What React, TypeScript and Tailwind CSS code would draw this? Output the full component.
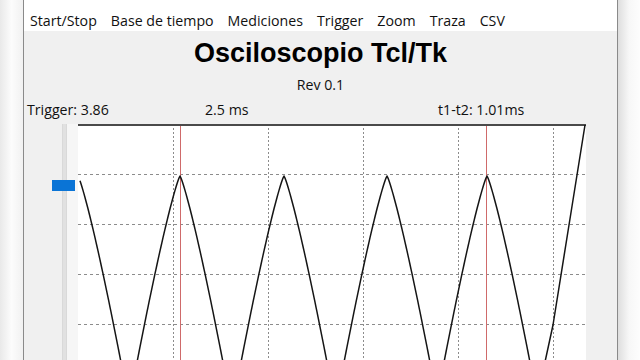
import React from "react";

const W = 508;
const H = 236;

function wavePath(): string {
  const peaks = [0, 102, 206, 309, 409];
  const pts: [number, number][] = [];
  const f = (x: number) => {
    let best = 1e9;
    for (const p of peaks) {
      const d = Math.abs(x - p);
      const y = 52 + 2.12 * Math.pow(d, 1.19);
      if (y < best) best = y;
    }
    return best;
  };
  for (let x = 2; x <= 459; x += 1) {
    pts.push([x, f(x)]);
  }
  pts.push([475, 201]);
  pts.push([491, 101]);
  pts.push([507, 1]);
  return pts.map((p, i) => `${i === 0 ? "M" : "L"}${p[0].toFixed(1)},${p[1].toFixed(1)}`).join(" ");
}

const vGrid = [95, 190, 285, 380, 475];
const hGrid = [50.5, 100.5, 150.5, 200.5];

export default function App() {
  const d = wavePath();
  return (
    <div
      className="w-[640px] h-[360px] overflow-hidden flex bg-white text-[#111]"
      style={{ fontFamily: '"Open Sans", "Noto Sans", sans-serif' }}
    >
      <div className="w-[23px] h-full bg-gradient-to-r from-[#e9e9e9] via-[#fcfcfc] to-[#f1f1f1]" />
      <div className="w-[595px] h-full flex flex-col border-x border-[#8a8a8a]">
        <div className="h-[32px] bg-white flex items-start pt-[11px] pl-[6px] gap-[14px] text-[14.2px] leading-[20px]">
          <span>Start/Stop</span>
          <span>Base de tiempo</span>
          <span>Mediciones</span>
          <span>Trigger</span>
          <span>Zoom</span>
          <span>Traza</span>
          <span>CSV</span>
        </div>
        <div className="flex-1 bg-[#f0f0f0] flex flex-col">
          <div
            className="mt-[7px] h-[31px] leading-[31px] text-center font-bold text-[27px] text-black"
            style={{ fontFamily: '"Liberation Sans", Arial, sans-serif' }}
          >
            Osciloscopio Tcl/Tk
          </div>
          <div className="mt-[6px] h-[20px] leading-[20px] text-center text-[14.2px]">Rev 0.1</div>
          <div className="mt-[5px] h-[20px] leading-[20px] flex text-[14.2px]">
            <span className="w-[181px] pl-[3px]">Trigger: 3.86</span>
            <span className="w-[233px]">2.5 ms</span>
            <span>t1-t2: 1.01ms</span>
          </div>
          <div className="mt-[4px] flex flex-1">
            <div className="relative w-[54px] h-full flex">
              <div className="ml-[38px] w-[5px] h-full bg-[#e1e1e1] border-x border-[#d9d9d9]" />
              <div className="w-[11px] h-full bg-[#f6f6f6]" />
              <div className="absolute left-[28px] top-[56px] w-[23px] h-[11px] bg-[#0a74d6]" />
            </div>
            <div className="w-[508px] h-full bg-white overflow-hidden">
              <svg width={W} height={H} viewBox={`0 0 ${W} ${H}`} className="block">
                {hGrid.map((y) => (
                  <line key={"h" + y} x1={0} y1={y} x2={W} y2={y} stroke="#8c8c8c" strokeWidth={1} strokeDasharray="3 3" />
                ))}
                {vGrid.map((x) => (
                  <line key={"v" + x} x1={x + 0.5} y1={0} x2={x + 0.5} y2={H} stroke="#8c8c8c" strokeWidth={1} strokeDasharray="2 2" />
                ))}
                <line x1={102.5} y1={0} x2={102.5} y2={H} stroke="#cf6a6a" strokeWidth={1} />
                <line x1={408.5} y1={0} x2={408.5} y2={H} stroke="#cf6a6a" strokeWidth={1} />
                <line x1={0} y1={1} x2={W} y2={1} stroke="#4a4a4a" strokeWidth={2} />
                <path d={d} fill="none" stroke="#151515" strokeWidth={1.5} strokeLinejoin="round" />
              </svg>
            </div>
            <div className="flex-1 h-full bg-[#f0f0f0]" />
          </div>
        </div>
      </div>
      <div className="flex-1 h-full bg-gradient-to-r from-[#dedede] via-[#f7f7f7] to-[#fdfdfd]" />
    </div>
  );
}
